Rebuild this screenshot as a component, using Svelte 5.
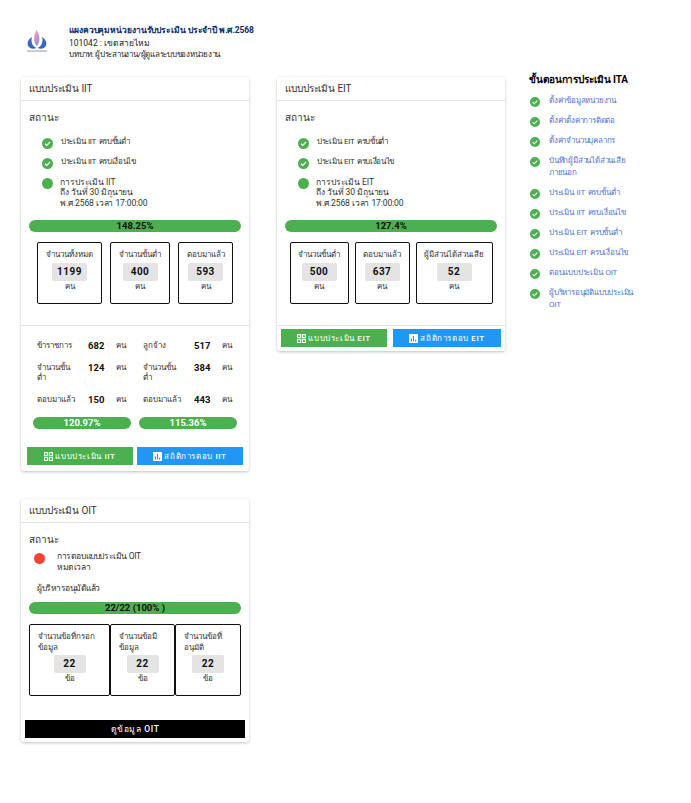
<script lang="ts">
	const iitStatus = [
		{ text: 'ประเมิน IIT ครบขั้นต่ำ', done: true },
		{ text: 'ประเมิน IIT ครบเงื่อนไข', done: true },
		{ text: 'การประเมิน IIT\nถึง วันที่ 30 มิถุนายน\nพ.ศ.2568 เวลา 17:00:00', done: false }
	];
	const eitStatus = [
		{ text: 'ประเมิน EIT ครบขั้นต่ำ', done: true },
		{ text: 'ประเมิน EIT ครบเงื่อนไข', done: true },
		{ text: 'การประเมิน EIT\nถึง วันที่ 30 มิถุนายน\nพ.ศ.2568 เวลา 17:00:00', done: false }
	];
	const iitBoxes = [
		{ label: 'จำนวนทั้งหมด', value: '1199', w: 65 },
		{ label: 'จำนวนขั้นต่ำ', value: '400', w: 60 },
		{ label: 'ตอบมาแล้ว', value: '593', w: 55 }
	];
	const eitBoxes = [
		{ label: 'จำนวนขั้นต่ำ', value: '500', w: 59 },
		{ label: 'ตอบมาแล้ว', value: '637', w: 55 },
		{ label: 'ผู้มีส่วนได้ส่วนเสีย', value: '52', w: 77 }
	];
	const oitBoxes = [
		{ label: 'จำนวนข้อที่กรอก\nข้อมูล', value: '22', w: 81 },
		{ label: 'จำนวนข้อมี\nข้อมูล', value: '22', w: 65 },
		{ label: 'จำนวนข้อที่\nอนุมัติ', value: '22', w: 66 }
	];
	const staff = [
		[
			{ label: 'ข้าราชการ', value: '682' },
			{ label: 'จำนวนขั้น\nต่ำ', value: '124' },
			{ label: 'ตอบมาแล้ว', value: '150' }
		],
		[
			{ label: 'ลูกจ้าง', value: '517' },
			{ label: 'จำนวนขั้น\nต่ำ', value: '384' },
			{ label: 'ตอบมาแล้ว', value: '443' }
		]
	];
	const steps = [
		'ตั้งค่าข้อมูลหน่วยงาน',
		'ตั้งค่าตั้งค่าการติดต่อ',
		'ตั้งค่าจำนวนบุคลากร',
		'บันทึกผู้มีส่วนได้ส่วนเสีย\nภายนอก',
		'ประเมิน IIT ครบขั้นต่ำ',
		'ประเมิน IIT ครบเงื่อนไข',
		'ประเมิน EIT ครบขั้นต่ำ',
		'ประเมิน EIT ครบเงื่อนไข',
		'ตอบแบบประเมิน OIT',
		'ผู้บริหารอนุมัติแบบประเมิน\nOIT'
	];
</script>

{#snippet check()}
	<svg class="check" viewBox="0 0 24 24">
		<circle cx="12" cy="12" r="12" fill="#4caf50" />
		<path d="M6.5 12.5l3.8 3.8 7.4-7.6" fill="none" stroke="#fff" stroke-width="2.6" />
	</svg>
{/snippet}

{#snippet statusList(items)}
	<ul class="status">
		{#each items as item}
			<li>
				{#if item.done}
					{@render check()}
				{:else}
					<span class="dot"></span>
				{/if}
				<span class="status-text" class:done={item.done}>{item.text}</span>
			</li>
		{/each}
	</ul>
{/snippet}

{#snippet boxes(items, unit)}
	<div class="boxes">
		{#each items as box}
			<div class="box" style="width: {box.w}px">
				<div class="box-label">{box.label}</div>
				<div class="box-value">{box.value}</div>
				<div class="box-unit">{unit}</div>
			</div>
		{/each}
	</div>
{/snippet}

{#snippet qrIcon()}
	<svg class="btn-icon" viewBox="0 0 12 12">
		<path fill="#fff" fill-rule="evenodd" d="M0 0h5.500v5.500H0zM1.500 1.500v2.500H4V1.500zM6.500 0H12v5.500H6.500zM8 1.500v2.500h2.500V1.500zM0 6.500h5.500V12H0zM1.500 8v2.500H4V8zM6.500 6.500H12V12H6.500zM8 8v2.500h2.500V8z" />
	</svg>
{/snippet}

{#snippet chartIcon()}
	<svg class="btn-icon" viewBox="0 0 12 12">
		<path fill="#fff" fill-rule="evenodd" d="M1 0h10a1 1 0 0 1 1 1v10a1 1 0 0 1-1 1H1a1 1 0 0 1-1-1V1a1 1 0 0 1 1-1zM2.500 6v4H4V6zM5.200 2.500V10h1.500V2.500zM8 7.500V10h1.500V7.500z" />
	</svg>
{/snippet}

<div class="page">
	<header class="top">
		<svg class="logo" viewBox="0 0 22 24">
			<defs>
				<linearGradient id="drop" x1="0" y1="0" x2="0" y2="1">
					<stop offset="0" stop-color="#e4a3c8" />
					<stop offset="0.6" stop-color="#c78fd0" />
					<stop offset="1" stop-color="#7f8fe0" />
				</linearGradient>
			</defs>
			<path d="M10.500 1c2.500 3.500 3.500 7 2.800 11-.3 1.800-1.200 3.500-2.300 5-1.500-1.500-2.600-3.500-2.800-6C8 7.500 9 4 10.500 1z" fill="url(#drop)" />
			<path d="M6 8C2 10.500.5 14.500 2.500 17.500c2 2.500 5.500 2.800 8 1.300C6.500 17.500 4.500 13 6 8z" fill="#3a68bd" />
			<path d="M16 8c4 2.500 5.500 6.500 3.500 9.500-2 2.500-5.500 2.800-8 1.300 4-1.300 6-5.800 4.500-10.800z" fill="#3a68bd" />
			<rect x="1" y="21.500" width="20" height="1.200" fill="#a8aebb" />
		</svg>
		<div class="top-text">
			<div class="top-title">แผงควบคุมหน่วยงานรับประเมิน ประจำปี พ.ศ.2568</div>
			<div>101042 : เขตสายไหม</div>
			<div class="role">บทบาท: ผู้ประสานงาน/ผู้ดูแลระบบของหน่วยงาน</div>
		</div>
	</header>

	<div class="columns">
		<div class="col">
			<section class="card">
				<h2 class="card-head">แบบประเมิน IIT</h2>
				<div class="card-body">
					<h3>สถานะ</h3>
					{@render statusList(iitStatus)}
					<div class="bar bar-main">148.25%</div>
					{@render boxes(iitBoxes, 'คน')}
				</div>
				<div class="staff">
					{#each staff as group, g}
						<div class="staff-col">
							{#each group as row}
								<div class="staff-row">
									<span class="staff-label">{row.label}</span>
									<b>{row.value}</b>
									<span class="staff-unit">คน</span>
								</div>
							{/each}
							<div class="bar bar-small">{g === 0 ? '120.97%' : '115.36%'}</div>
						</div>
					{/each}
				</div>
				<div class="actions">
					<button class="btn green">{@render qrIcon()}แบบประเมิน IIT</button>
					<button class="btn blue">{@render chartIcon()}สถิติการตอบ IIT</button>
				</div>
			</section>

			<section class="card oit">
				<h2 class="card-head">แบบประเมิน OIT</h2>
				<div class="card-body">
					<h3>สถานะ</h3>
					<div class="oit-status">
						<span class="dot red"></span>
						<span class="status-text">การตอบแบบประเมิน OIT{'\n'}หมดเวลา</span>
					</div>
					<div class="approved">ผู้บริหารอนุมัติแล้ว</div>
					<div class="bar bar-main">22/22 (100% )</div>
					<div class="oit-boxes">
						{@render boxes(oitBoxes, 'ข้อ')}
					</div>
				</div>
				<button class="btn black">ดูข้อมูล OIT</button>
			</section>
		</div>

		<div class="col col-eit">
			<section class="card">
				<h2 class="card-head">แบบประเมิน EIT</h2>
				<div class="card-body">
					<h3>สถานะ</h3>
					{@render statusList(eitStatus)}
					<div class="bar bar-main">127.4%</div>
					{@render boxes(eitBoxes, 'คน')}
				</div>
				<div class="actions eit-actions">
					<button class="btn green">{@render qrIcon()}แบบประเมิน EIT</button>
					<button class="btn blue">{@render chartIcon()}สถิติการตอบ EIT</button>
				</div>
			</section>
		</div>

		<aside class="steps">
			<h4>ขั้นตอนการประเมิน ITA</h4>
			<ul>
				{#each steps as step}
					<li>{@render check()}<a href="#top">{step}</a></li>
				{/each}
			</ul>
		</aside>
	</div>
</div>

<style>
	:global(body) {
		margin: 0;
		background: #fff;
	}

	.page {
		height: 803px;
		box-sizing: border-box;
		padding: 24px 0 0 21px;
		font-family: Roboto, 'Noto Sans', 'Liberation Sans', sans-serif;
		color: #333;
		overflow: hidden;
	}

	.top {
		display: flex;
		align-items: flex-start;
		height: 53px;
	}

	.logo {
		width: 22px;
		height: 24px;
		margin: 5px 0 0 5px;
	}

	.top-text {
		margin-left: 21px;
		font-size: 8.5px;
		line-height: 12.5px;
		color: #222;
	}

	.top-title {
		font-weight: 700;
		letter-spacing: -0.1px;
		color: #0b2a6b;
	}

	.role {
		font-size: 8px;
		letter-spacing: -0.25px;
	}

	.columns {
		display: flex;
		align-items: flex-start;
	}

	.col {
		width: 228px;
		margin-right: 28px;
		display: flex;
		flex-direction: column;
		gap: 28px;
	}

	.col-eit {
		margin-right: 24px;
	}

	.card {
		background: #fff;
		border-radius: 3px;
		box-shadow: 0 1px 3px rgba(0, 0, 0, 0.25);
	}

	.card-head {
		box-sizing: border-box;
		margin: 0;
		height: 24px;
		padding: 0 8px;
		font-size: 10px;
		font-weight: 400;
		letter-spacing: -0.1px;
		line-height: 23px;
		border-bottom: 1px solid #e3e3e3;
	}

	.card-body {
		padding: 0 8px;
	}

	h3 {
		margin: 0;
		padding-top: 9px;
		font-size: 10px;
		font-weight: 400;
		line-height: 16px;
	}

	.status {
		list-style: none;
		margin: 0;
		padding: 9.5px 0 0 13px;
	}

	.status li {
		display: flex;
		align-items: flex-start;
		margin-bottom: 7px;
	}

	.check {
		width: 11px;
		height: 11px;
		flex: none;
	}

	.status li .check {
		margin-top: 2px;
	}

	.dot {
		width: 11px;
		height: 11px;
		border-radius: 50%;
		background: #4caf50;
		flex: none;
		margin-top: 2px;
	}

	.dot.red {
		background: #f44336;
		margin-top: 1.5px;
	}

	.status-text {
		margin-top: 1px;
		margin-left: 7px;
		font-size: 8.500px;
		letter-spacing: -0.1px;
		line-height: 10.500px;
		white-space: pre-line;
	}

	.status-text.done {
		margin-left: 8px;
		font-size: 8px;
		letter-spacing: -0.3px;
		word-spacing: 1px;
	}

	.bar {
		height: 12px;
		border-radius: 6px;
		background: #4caf50;
		text-align: center;
		font-weight: 700;
		font-size: 9.500px;
		line-height: 11px;
	}

	.bar-main {
		color: #111;
		margin-top: 12px;
	}

	.bar-small {
		width: 98px;
		margin: 12px 0 0 -4px;
		color: #fff;
	}

	.boxes {
		display: flex;
		justify-content: center;
		gap: 8px;
		margin-top: 10px;
		padding-bottom: 21px;
	}

	.col-eit .boxes {
		gap: 6px;
	}

	.box {
		box-sizing: border-box;
		height: 62px;
		border: 1px solid #111;
		border-radius: 2px;
		text-align: center;
		padding-top: 6px;
		font-size: 8px;
		line-height: 12px;
	}

	.box-label {
		white-space: nowrap;
	}

	.box-value {
		width: 35px;
		height: 18px;
		margin: 2px auto 0;
		background: #e4e4e4;
		border-radius: 2px;
		font-weight: 700;
		font-size: 10px;
		letter-spacing: 0.5px;
		line-height: 18px;
		color: #111;
	}

	.oit-boxes :global(.boxes) {
		gap: 0;
		justify-content: flex-start;
		padding-bottom: 24px;
	}

	.oit-boxes :global(.box) {
		height: 72px;
		padding-top: 6.500px;
	}

	.oit-boxes :global(.box-label) {
		padding-left: 8px;
		text-align: left;
		line-height: 11px;
		white-space: pre-line;
	}

	.oit-boxes :global(.box-value) {
		width: 32px;
	}

	.staff {
		display: flex;
		gap: 8px;
		padding: 0 0 0 16px;
		border-top: 1px solid #e3e3e3;
	}

	.staff-col {
		width: 98px;
		padding-top: 15px;
	}

	.staff-row {
		display: flex;
		align-items: flex-start;
		margin-bottom: 12px;
		font-size: 8px;
		line-height: 10px;
	}

	.staff-row:nth-child(3) {
		margin-bottom: 0;
	}

	.staff-label {
		width: 51px;
		white-space: pre-line;
		flex: none;
	}

	.staff-row b {
		width: 28px;
		flex: none;
		font-size: 9.500px;
		color: #111;
	}

	.actions {
		display: flex;
		gap: 4px;
		padding: 18px 6px 6px;
	}

	.eit-actions {
		padding: 3px 4px 4px;
		border-top: 1px solid #e3e3e3;
		gap: 6px;
	}

	.eit-actions .blue {
		flex: none;
		width: 108px;
	}

	.btn {
		flex: 1;
		height: 18px;
		padding: 0;
		border: 0;
		display: flex;
		align-items: center;
		justify-content: center;
		gap: 2px;
		font-family: inherit;
		font-size: 8px;
		font-weight: 500;
		letter-spacing: 0.6px;
		color: #fff;
	}

	.btn-icon {
		width: 9px;
		height: 9px;
	}

	.green {
		background: #4caf50;
	}

	.blue {
		background: #2196f3;
	}

	.black {
		width: 220px;
		margin: 0 4px;
		background: #000;
		font-size: 8.500px;
	}

	.oit {
		padding-bottom: 4px;
	}

	.oit-status {
		display: flex;
		align-items: flex-start;
		padding: 3px 0 0 5px;
	}

	.oit-status .status-text {
		margin-top: 0;
		margin-left: 12px;
		letter-spacing: -0.4px;
	}

	.approved {
		margin: 9.500px 0 0 8px;
		font-size: 8.500px;
		letter-spacing: -0.5px;
		line-height: 12px;
	}

	.oit .bar-main {
		margin-top: 8px;
	}

	.steps {
		width: 120px;
		margin-top: -3px;
	}

	h4 {
		margin: 0;
		font-size: 10px;
		font-weight: 700;
		letter-spacing: -0.1px;
		line-height: 12px;
		color: #000;
		white-space: nowrap;
	}

	.steps ul {
		list-style: none;
		margin: 0;
		padding: 1px 0 0 1px;
	}

	.steps li {
		display: flex;
		align-items: flex-start;
		margin-top: 8px;
		gap: 9px;
	}

	.steps li .check {
		width: 10px;
		height: 10px;
		margin-top: 2px;
	}

	.steps a {
		font-size: 8px;
		letter-spacing: -0.2px;
		word-spacing: 1px;
		line-height: 12px;
		color: #5474d6;
		text-decoration: none;
		white-space: pre-line;
	}
</style>
